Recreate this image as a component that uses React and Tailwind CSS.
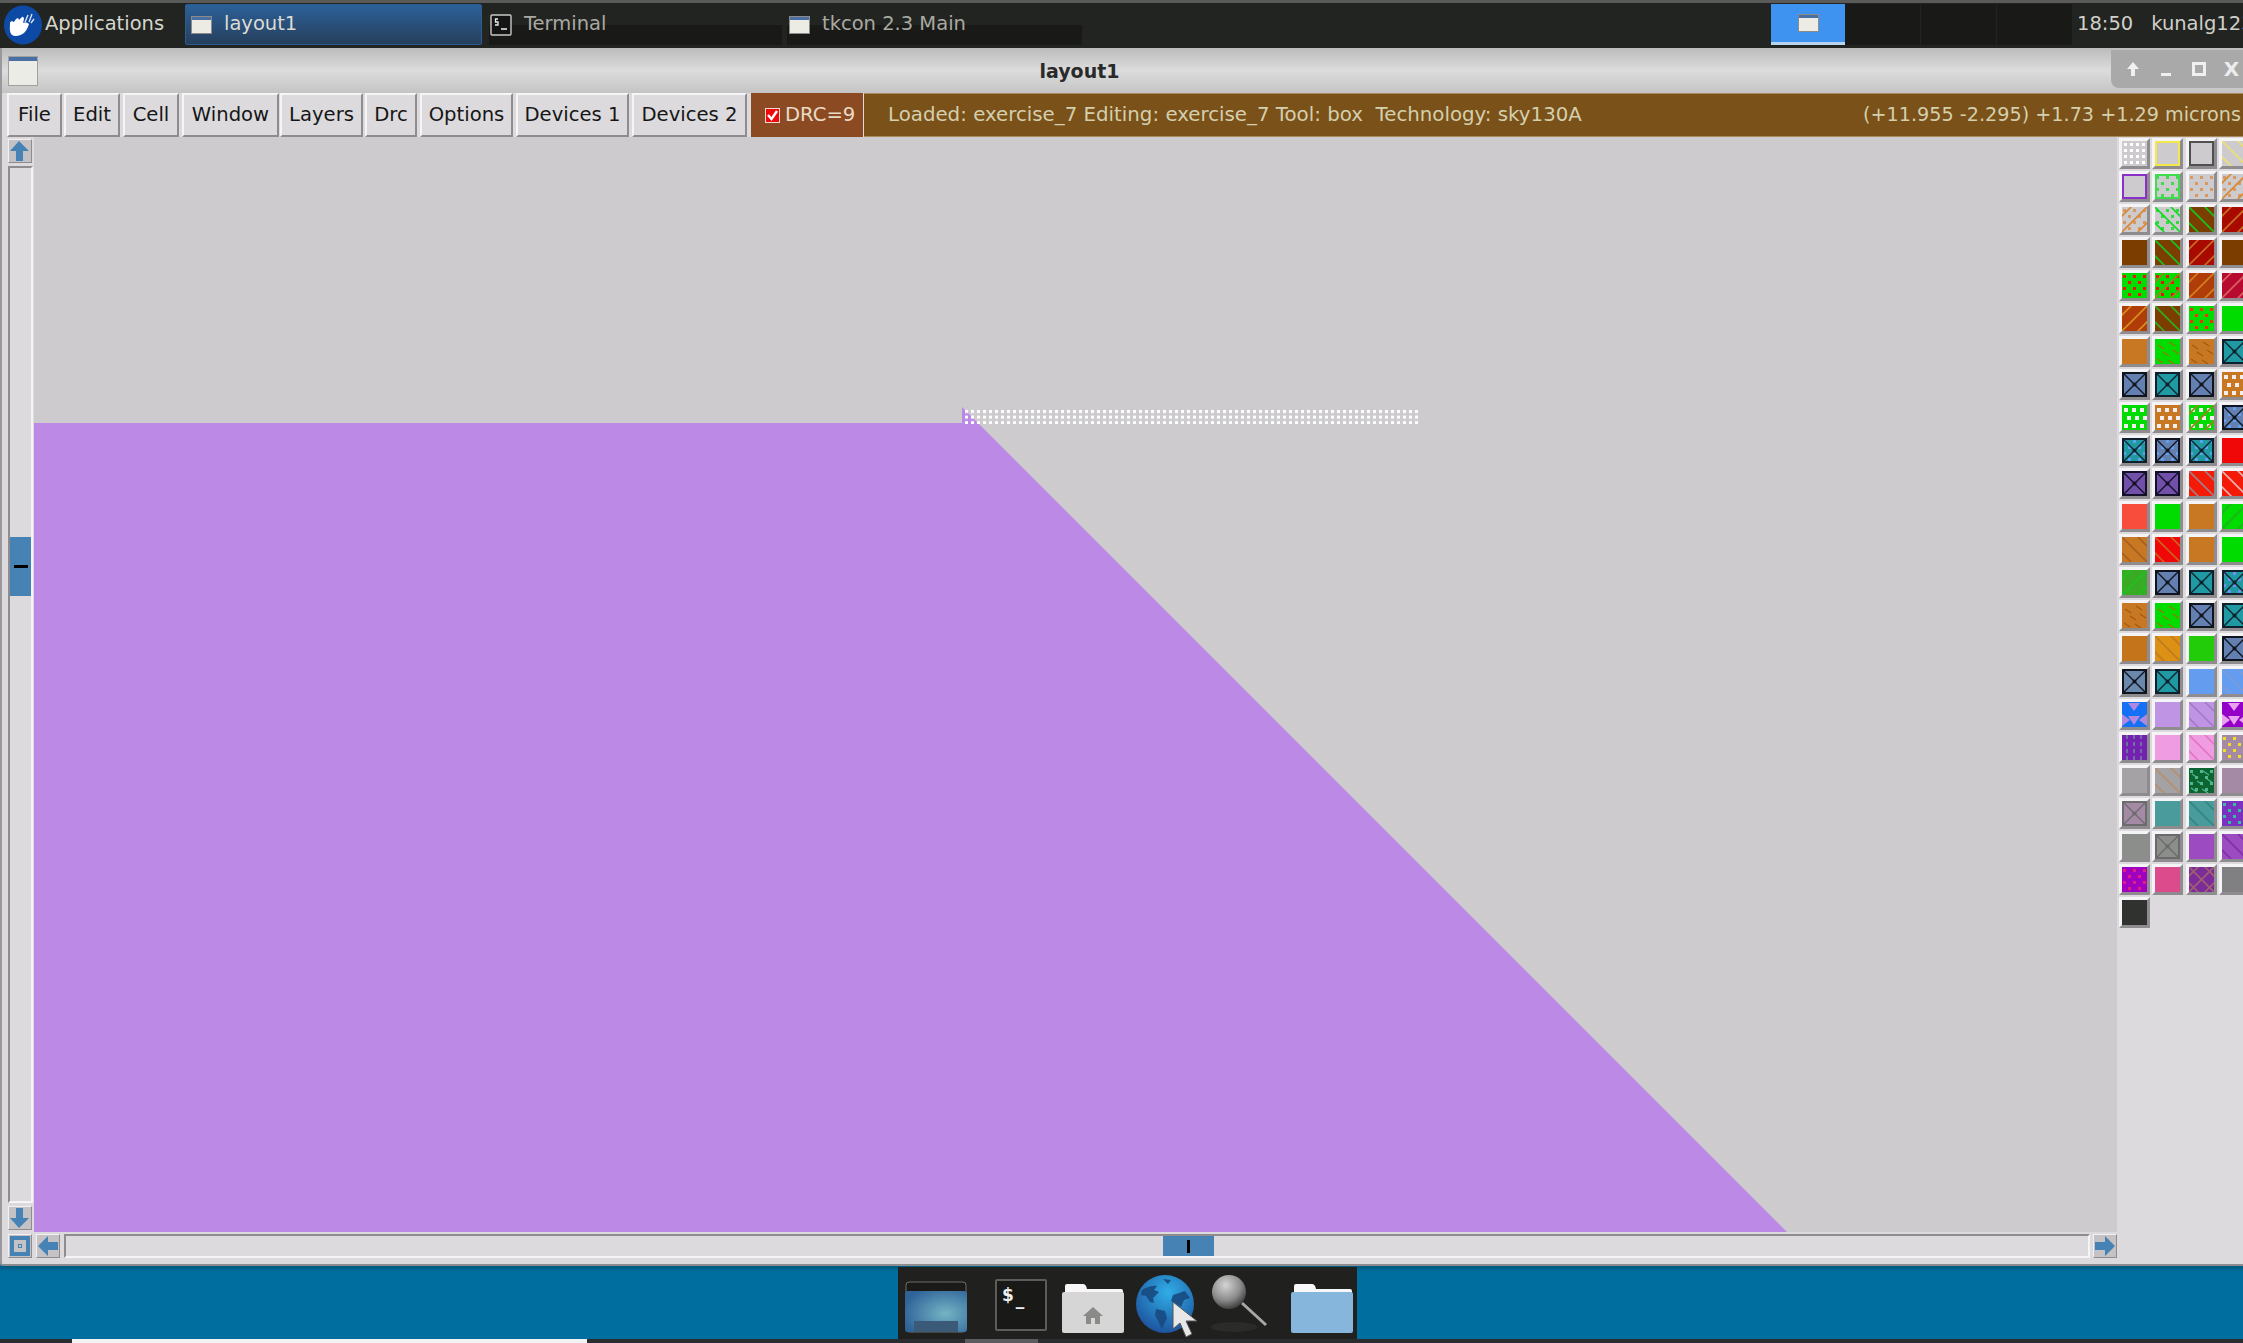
import React from "react";

const GREY = "#cdcbce";
const ORANGE = "#c87822";
const GREEN = "#00dc00";
const RED = "#f00808";
const BROWN = "#7c3e00";
const DARKRED = "#a80a00";
const RUST = "#b03c08";
const TEAL = "#1f9aa2";
const BLUE = "#6480b0";
const VIOLET = "#7050a8";
const LAV = "#c094e4";
const PINK = "#f09ce2";
const MAUVE = "#a48aa4";
const SEA = "#4a9c9c";
const PUR = "#9c4cc0";
const LBLUE = "#649cf0";

// each cell: fill, then "kind:ink" layers
const palette = [
  [[GREY, "dots:#ffffff"], [GREY, "box:#f2e84a"], [GREY, "box:#505050"], [GREY, "down:#ece070"]],
  [[GREY, "box:#8a30c8"], [GREY, "stag:#40dc50", "box:#40dc50"], [GREY, "stag:#d89860"], [GREY, "stag:#d89860", "up:#d88830"]],
  [[GREY, "stag:#d89860", "up:#d88830"], [GREY, "stag:#30dc40", "down:#10dc20"], [BROWN, "down:#10c820"], [DARKRED, "up:#c87020"]],
  [[BROWN], [BROWN, "down:#10c820"], [DARKRED, "up:#c87020"], [BROWN]],
  [[GREEN, "stag:#f01010"], [GREEN, "stag:#f01010", "up:#a08020"], [RUST, "up:#d08020"], ["#b80a30", "up:#d86060"]],
  [[RUST, "up:#d89020"], [BROWN, "down:#30b020"], [GREEN, "stag:#f03010"], [GREEN]],
  [[ORANGE], [GREEN, "dash:#a07010"], [ORANGE, "dash:#a05a10"], [TEAL, "cross:#10202c"]],
  [[BLUE, "cross:#10141f"], [TEAL, "cross:#10202c"], [BLUE, "cross:#10141f"], [ORANGE, "holes:#f2eef0"]],
  [[GREEN, "holes:#f2eef0"], [ORANGE, "holes:#f2eef0"], [GREEN, "holes:#f2eef0", "up:#a08020"], [BLUE, "stag:#60a0f0", "cross:#10141f"]],
  [[TEAL, "stag:#60a0f0", "cross:#10202c"], [BLUE, "stag:#60a0f0", "cross:#10141f"], [TEAL, "stag:#60a0f0", "cross:#10202c"], [RED]],
  [[VIOLET, "cross:#14102a"], [VIOLET, "cross:#14102a"], ["#f41a08", "down:#a08080"], ["#f41a08", "down:#e8b0b0"]],
  [["#f84c3c"], [GREEN], [ORANGE], [GREEN, "up:#20b020"]],
  [[ORANGE, "down:#a86020"], [RED, "down:#d06020"], [ORANGE], [GREEN]],
  [["#38ac24", "up:#20c020"], [BLUE, "cross:#10141f"], [TEAL, "cross:#10202c"], [TEAL, "stag:#7090f0", "cross:#10202c"]],
  [[ORANGE, "dash:#a05a10"], [GREEN, "dash:#a07010"], [BLUE, "cross:#10141f"], [TEAL, "cross:#10202c"]],
  [["#c4741a"], ["#dc9014", "down:#c07c20"], ["#22cc08"], [BLUE, "cross:#10141f"]],
  [["#6a88ac", "cross:#10141f"], [TEAL, "cross:#10202c"], [LBLUE], [LBLUE, "down:#7c9cd8"]],
  [["#1470f4", "tri:#b088e0"], [LAV], [LAV, "down:#a878c8"], ["#9400c8", "tri:#e8a0f0"]],
  [["#7420b0", "stripe:#7070a0"], [PINK], [PINK, "down:#e078c0"], [MAUVE, "stag:#f0e020"]],
  [["#a4a2a4"], ["#a4a2a4", "down:#b89070"], ["#0c6430", "stag:#50b890", "dash:#50b890"], [MAUVE]],
  [[MAUVE, "cross:#6c6c6c"], [SEA], [SEA, "down:#308880"], ["#7c30c0", "stag:#30c0a0"]],
  [["#8c8e8c"], ["#8c8e8c", "cross:#6a6a6a"], [PUR], [PUR, "down:#8030a8"]],
  [["#a000c0", "stag:#e02080"], ["#dc4c8c"], ["#7c2c98", "up:#a06070", "down:#a06070"], ["#808082"]],
  [["#303230"]],
];

const step = [3, 9, 15, 21];
const rowsY = [2, 8, 14, 20];

const Layer = ({ spec }) => {
  const [kind, ink] = spec.split(":");
  if (kind === "box") {
    return <rect x="1" y="1" width="23" height="23" fill="none" stroke={ink} strokeWidth="2" />;
  }
  if (kind === "up" || kind === "down") {
    const lines = [-16, 0, 16];
    return lines.map((p) =>
      kind === "up" ? (
        <line key={p} x1={p - 5} y1="30" x2={p + 30} y2="-5" stroke={ink} strokeWidth="1.6" />
      ) : (
        <line key={p} x1={p - 5} y1="-5" x2={p + 30} y2="30" stroke={ink} strokeWidth="1.6" />
      )
    );
  }
  if (kind === "cross") {
    return (
      <g stroke={ink} fill="none">
        <rect x="1" y="1" width="23" height="23" strokeWidth="2" />
        <path d="M2 2L23 23M23 2L2 23" strokeWidth="1.4" />
        <circle cx="12.5" cy="12.5" r="2" fill={ink} stroke="none" />
      </g>
    );
  }
  if (kind === "dots") {
    return step.flatMap((y) =>
      step.map((x) => <rect key={`${x}-${y}`} x={x - 1} y={y - 1} width="3" height="3" fill={ink} />)
    );
  }
  if (kind === "stag") {
    return rowsY.flatMap((y, r) =>
      [1, 11, 21].map((x) => (
        <rect key={`${x}-${y}`} x={x + (r % 2 ? 5 : 0)} y={y} width="3" height="3" fill={ink} />
      ))
    );
  }
  if (kind === "holes") {
    return [3, 11, 19].flatMap((y, r) =>
      [2, 10, 18].map((x) => (
        <rect key={`${x}-${y}`} x={x + (r === 1 ? 3 : 0)} y={y} width="4" height="4" fill={ink} />
      ))
    );
  }
  if (kind === "dash") {
    return [[3, 6], [14, 3], [8, 13], [18, 11], [2, 20], [13, 21]].map(([x, y]) => (
      <line key={`${x}-${y}`} x1={x} y1={y} x2={x + 6} y2={y + 4} stroke={ink} strokeWidth="1.2" />
    ));
  }
  if (kind === "tri") {
    return (
      <path d="M6 1h12l-6 8zM0 12l8 6-8 6zM25 12l-8 6 8 6zM6 14h12l-6 9z" fill={ink} />
    );
  }
  return [5, 12, 19].map((x) => (
    <line key={x} x1={x} y1="0" x2={x} y2="25" stroke={ink} strokeWidth="2" strokeDasharray="4 3" />
  ));
};

const PaletteCell = ({ cell }) => {
  const [fill, ...layers] = cell;
  return (
    <div className="w-[31px] h-[31px] border-[3px] border-t-[#f4f3f5] border-l-[#f4f3f5] border-b-[#8e8c8f] border-r-[#8e8c8f]">
      <svg width="25" height="25" viewBox="0 0 25 25" className="block">
        <rect width="25" height="25" fill={fill} />
        {layers.map((spec) => (
          <Layer key={spec} spec={spec} />
        ))}
      </svg>
    </div>
  );
};

const TkButton = ({ label, className }) => (
  <div className={`flex items-center justify-center bg-[#dcdadd] border-2 border-t-[#f5f4f6] border-l-[#f5f4f6] border-b-[#8e8c8f] border-r-[#8e8c8f] text-[#161616] ${className}`}>
    {label}
  </div>
);

const ArrowButton = ({ dir, className }) => {
  const shapes = {
    up: "M10 1L20 11H14V21H7V11H1Z",
    down: "M10 21L20 11H14V1H7V11H1Z",
    left: "M1 11L11 1V7H21V15H11V21Z",
    right: "M21 11L11 1V7H1V15H11V21Z",
  };
  return (
    <div className={`w-[24px] h-[24px] flex items-center justify-center bg-[#c4c2c5] border border-t-[#f0eff1] border-l-[#f0eff1] border-b-[#8e8c8f] border-r-[#8e8c8f] ${className || ""}`}>
      <svg width="22" height="22" viewBox="0 0 22 22">
        <path d={shapes[dir]} fill="#4682b4" />
      </svg>
    </div>
  );
};

const WindowGlyph = () => (
  <svg width="21" height="18" viewBox="0 0 21 18" className="shrink-0">
    <rect x="0.5" y="0.5" width="20" height="17" fill="#ecebe4" stroke="#8b8b88" />
    <rect x="1" y="1" width="19" height="3" fill="#4a6fa5" />
  </svg>
);

const TerminalGlyph = () => (
  <svg width="22" height="22" viewBox="0 0 22 22" className="shrink-0">
    <rect x="1" y="1" width="20" height="20" rx="1" fill="#141414" stroke="#c8c8c8" strokeWidth="1.4" />
    <path d="M8 5H5.5v3H8v3H5M11 15h6" stroke="#eee" strokeWidth="1.3" fill="none" />
  </svg>
);

const TaskButton = ({ icon, label, active, className }) => (
  <div
    className={`shrink-0 flex items-center gap-[12px] h-[41px] ${className} ${
      active
        ? "bg-linear-to-b from-[#2b6199] to-[#263f5c] border border-[#2c5c90] rounded-[2px] text-[#dcdcd4]"
        : "bg-linear-to-b from-[#222421] from-50% to-[#191a18] to-50% text-[#a9a9a2]"
    }`}
  >
    {icon}
    <span className="text-[19.5px] leading-none pb-[2px]">{label}</span>
  </div>
);

const HandLogo = () => (
  <svg width="40" height="40" viewBox="0 0 40 40" className="shrink-0 ml-[2px]">
    <ellipse cx="21" cy="20" rx="19" ry="19.5" fill="#0d4aa6" />
    <path
      d="M8 18c0-2 3-2 4-1l2-3c1-1 3-1 3 1l3-3c1-1 2 1 2 2l-1 4c3-1 5 0 6 1-1 3-2 6-5 9-4 3-9 4-12 2-3-3-2-8-2-12z"
      fill="#ffffff"
    />
    <path d="M23 17l3-7M27 17l3-8M29 18l3-4" stroke="#dbe4f4" strokeWidth="1.4" fill="none" />
  </svg>
);

const DesktopIcon = () => (
  <svg width="64" height="52" viewBox="0 0 64 52" className="shrink-0">
    <defs>
      <radialGradient id="deskGlow" cx="0.65" cy="0.55" r="0.7">
        <stop offset="0" stopColor="#74b4c4" />
        <stop offset="1" stopColor="#2f6299" />
      </radialGradient>
    </defs>
    <rect x="2" y="1" width="60" height="50" rx="3" fill="#1a1a18" stroke="#6c6c68" />
    <rect x="1" y="10" width="62" height="41" rx="3" fill="url(#deskGlow)" />
    <rect x="10" y="40" width="44" height="11" fill="#3a5a78" />
  </svg>
);

const TermIcon = () => (
  <div className="w-[52px] h-[52px] shrink-0 rounded-[2px] border-2 border-[#5c5c5a] bg-[#191a18] pl-[5px] pt-[6px] text-[#efefef] text-[17px] leading-none font-bold">
    $<span className="ml-[2px] relative top-[4px]">_</span>
  </div>
);

const FolderIcon = ({ body, tab, children }) => (
  <svg width="62" height="50" viewBox="0 0 62 50" className="shrink-0">
    <path d="M3 8V3q0-2 2-2h16q3 0 4 5h34q2 0 2 2v4H3z" fill={tab} />
    <rect x="0" y="9" width="62" height="41" rx="2" fill={body} />
    {children}
  </svg>
);

const Globe = () => (
  <svg width="58" height="58" viewBox="0 0 58 58" className="shrink-0">
    <defs>
      <radialGradient id="globeFill" cx="0.55" cy="0.3" r="0.75">
        <stop offset="0" stopColor="#30aee6" />
        <stop offset="1" stopColor="#1c4e9a" />
      </radialGradient>
    </defs>
    <circle cx="29" cy="29" r="29" fill="url(#globeFill)" />
    <path
      d="M6 15c5-3 11-5 15-4l-3 4 5 2-6 6 1 5-4-1-4-6-5-1zM20 34l9 2 2 7-5 11-3-6-4-8zM27 4l8 1-3 4zM37 20l12-4 5 7-6 2-3 7-5-3-5-3zM44 38l6 1-3 8-5-2z"
      fill="#174a80"
      opacity="0.9"
    />
  </svg>
);

const Magnifier = () => (
  <svg width="58" height="58" viewBox="0 0 58 58" className="shrink-0">
    <defs>
      <radialGradient id="lensFill" cx="0.4" cy="0.3" r="0.75">
        <stop offset="0" stopColor="#d4d4d4" />
        <stop offset="0.6" stopColor="#8a8a8a" />
        <stop offset="1" stopColor="#333333" />
      </radialGradient>
    </defs>
    <ellipse cx="24" cy="52" rx="23" ry="5" fill="#2b2c2a" />
    <line x1="32" y1="28" x2="56" y2="50" stroke="#a8a8a8" strokeWidth="3" />
    <circle cx="19" cy="17" r="17" fill="url(#lensFill)" />
  </svg>
);

const App = () => {
  return (
    <div className="w-[2243px] h-[1343px] overflow-hidden flex flex-col bg-[#006f9f] font-['DejaVu_Sans',sans-serif]">
      {/* Top panel */}
      <div className="h-[48px] shrink-0 border-t-[3px] border-[#5a5a58] bg-[#222421] flex items-center pb-[2px]">
        <HandLogo />
        <span className="ml-[3px] w-[140px] shrink-0 text-[19.5px] leading-none text-[#d6d6ce] pb-[2px]">Applications</span>
        <TaskButton active icon={<WindowGlyph />} label="layout1" className="w-[297px] pl-[5px]" />
        <TaskButton icon={<TerminalGlyph />} label="Terminal" className="w-[293px] ml-[7px] pl-[1px]" />
        <TaskButton icon={<WindowGlyph />} label="tkcon 2.3 Main" className="w-[295px] ml-[5px] pl-[2px]" />
        <div className="ml-[689px] w-[74px] shrink-0 h-[41px] bg-[#3d93ef] border-b-[3px] border-[#b8d4f0] flex items-center justify-center">
          <WindowGlyph />
        </div>
        <div className="w-[75px] shrink-0 h-[41px] bg-[#191a18]" />
        <div className="w-[75px] shrink-0 h-[41px] ml-px bg-[#191a18]" />
        <div className="w-[75px] shrink-0 h-[41px] ml-px bg-[#191a18]" />
        <span className="ml-[5px] shrink-0 text-[19.5px] leading-none text-[#d0d0c8] whitespace-nowrap pb-[2px]">18:50</span>
        <span className="ml-[18px] shrink-0 text-[19.5px] leading-none text-[#d0d0c8] whitespace-nowrap pb-[2px]">kunalg123</span>
      </div>

      {/* Magic layout window */}
      <div className="h-[1218px] shrink-0 flex flex-col bg-[#dcdadd] rounded-bl-[3px] border-b-2 border-l-2 border-b-[#8e8c8f] border-l-[#9a989b]">
        <div className="h-[45px] shrink-0 flex items-center bg-linear-to-b from-[#bcbcbc] via-[#dcdcdc] to-[#c4c4c4]">
          <div className="ml-[6px] w-[30px] h-[30px] border border-[#a0a0a0] bg-linear-to-b from-[#4a6fa5] from-15% to-[#ecece6] to-15%" />
          <div className="flex-1 text-center text-[19px] font-bold leading-none text-[#2a2a2a] pl-[10px] pt-[2px]">layout1</div>
          <div className="w-[132px] h-[38px] mb-[3px] pl-[5px] bg-[#a9a9a9] rounded-bl-[8px] grid grid-cols-[repeat(4,33px)] items-center justify-items-center text-[#ececec] text-[20px] font-bold">
            <svg width="16" height="18" viewBox="0 0 16 18">
              <path d="M8 2L14 9H10V16H6V9H2Z" fill="#f0f0f0" />
            </svg>
            <span className="w-[10px] h-[3px] mt-[10px] bg-[#f0f0f0]" />
            <span className="w-[14px] h-[14px] border-[3px] border-[#f0f0f0]" />
            <span className="leading-none">X</span>
          </div>
        </div>

        <div className="h-[44px] shrink-0 flex items-stretch text-[19.6px] leading-none pl-[5px]">
          <TkButton label="File" className="w-[55px]" />
          <TkButton label="Edit" className="w-[56px] ml-[2px]" />
          <TkButton label="Cell" className="w-[56px] ml-[3px]" />
          <TkButton label="Window" className="w-[97px] ml-[3px]" />
          <TkButton label="Layers" className="w-[83px] ml-[1px]" />
          <TkButton label="Drc" className="w-[52px] ml-[2px]" />
          <TkButton label="Options" className="w-[93px] ml-[3px]" />
          <TkButton label="Devices 1" className="w-[113px] ml-[3px]" />
          <TkButton label="Devices 2" className="w-[115px] ml-[3px]" />
          <div className="ml-[4px] w-[112px] bg-[#8c4a22] flex items-center pl-[14px] gap-[5px] text-[#e8dcc8]">
            <span className="w-[15px] h-[15px] bg-[#ee0a0a] border border-[#f2d8d0] flex items-center justify-center">
              <svg width="13" height="13" viewBox="0 0 13 13">
                <path d="M2 6L5.5 10L11 2" stroke="#ffffff" strokeWidth="2.4" fill="none" />
              </svg>
            </span>
            DRC=9
          </div>
          <div className="ml-px flex-1 bg-[#7a5118] border-y border-[#a88a5c] flex items-center justify-between pl-[24px] text-[#d4cfae] whitespace-pre">
            <span className="text-[19.8px]">Loaded: exercise_7 Editing: exercise_7 Tool: box  Technology: sky130A</span>
            <span className="mr-[2px] text-[19.2px]">(+11.955 -2.295) +1.73 +1.29 microns</span>
          </div>
        </div>

        <div className="flex-1 min-h-0 flex">
          {/* Vertical scrollbar */}
          <div className="w-[32px] shrink-0 flex flex-col pl-[6px] pr-[1px] pt-[2px] pb-[2px] gap-[3px]">
            <ArrowButton dir="up" />
            <div className="flex-1 border-2 border-t-[#8e8c8f] border-l-[#8e8c8f] border-r-[#f5f4f6] border-b-[#f5f4f6] pt-[369px]">
              <div className="h-[59px] bg-[#4682b4] flex items-center justify-center">
                <span className="w-[14px] h-[3px] bg-black" />
              </div>
            </div>
            <ArrowButton dir="down" />
          </div>

          {/* Layout canvas */}
          <div className="relative flex-1 min-w-0 bg-[#cdcbce] overflow-hidden">
            <svg width="2083" height="1095" viewBox="0 0 2083 1095" className="absolute inset-0">
              <defs>
                <pattern id="boxDots" width="6" height="5.6" patternUnits="userSpaceOnUse" x="931" y="273">
                  <rect width="3" height="3" fill="#ffffff" />
                </pattern>
              </defs>
              <path d="M0 286H928V270L1753 1095H0Z" fill="#bc8ae6" />
              <rect x="931" y="273" width="453" height="14" fill="url(#boxDots)" />
            </svg>
          </div>

          {/* Layer palette */}
          <div className="w-[126px] shrink-0 pl-[2px] pt-[1px] overflow-hidden">
            <div className="grid grid-cols-[repeat(4,31px)] auto-rows-[31px] gap-x-[2.3px] gap-y-[2px]">
              {palette.flatMap((row, r) =>
                row.map((cell, i) => <PaletteCell key={`${r}-${i}`} cell={cell} />)
              )}
            </div>
          </div>
        </div>

        {/* Horizontal scrollbar */}
        <div className="h-[32px] shrink-0 flex items-start pl-[6px] pt-[2px]">
          <div className="w-[24px] h-[24px] bg-[#c4c2c5] flex items-center justify-center border border-t-[#f0eff1] border-l-[#f0eff1] border-b-[#8e8c8f] border-r-[#8e8c8f]">
            <span className="w-[20px] h-[20px] border-[4px] border-[#4682b4] flex items-center justify-center">
              <span className="w-[4px] h-[4px] border border-[#4682b4]" />
            </span>
          </div>
          <ArrowButton dir="left" className="ml-[4px]" />
          <div className="ml-[4px] w-[2026px] h-[24px] border-2 border-t-[#8e8c8f] border-l-[#8e8c8f] border-r-[#f5f4f6] border-b-[#f5f4f6] pl-[1097px]">
            <div className="w-[51px] h-full bg-[#4682b4] flex items-center justify-center">
              <span className="w-[3px] h-[13px] bg-black" />
            </div>
          </div>
          <ArrowButton dir="right" className="ml-[3px]" />
        </div>
      </div>

      {/* Desktop with dock */}
      <div className="flex-1 min-h-0 flex flex-col bg-linear-to-b from-[#005a80] from-0% to-[#006f9f] to-[6px]">
        <div className="relative ml-[898px] mt-[1px] w-[459px] h-[72px] shrink-0 bg-[#20211f] flex items-end pb-[6px] pl-[6px]">
          <DesktopIcon />
          <div className="ml-[27px] mb-[2px]">
            <TermIcon />
          </div>
          <div className="ml-[15px]">
            <FolderIcon body="#d6d6d6" tab="#f8f6f8">
              <path d="M31 24l10 9h-3v8h-5v-6h-4v6h-5v-8h-3z" fill="#8a8a86" />
            </FolderIcon>
          </div>
          <div className="ml-[12px]">
            <Globe />
          </div>
          <div className="ml-[16px]">
            <Magnifier />
          </div>
          <div className="ml-[23px]">
            <FolderIcon body="#86b6dc" tab="#f8f8fa" />
          </div>
          <svg width="28" height="38" viewBox="0 0 28 38" className="absolute left-[274px] top-[34px]">
            <path d="M1 1V28L8 22L14 36L20 33L14 20H25Z" fill="#e8e8e8" stroke="#555" strokeWidth="1" />
          </svg>
        </div>
        <div className="flex-1 flex bg-[#2a2d30]">
          <div className="ml-[72px] w-[515px] bg-[#f2f2f2]" />
          <div className="ml-[378px] w-[73px] bg-[#5c5c60]" />
        </div>
      </div>
    </div>
  );
};

export default App;
